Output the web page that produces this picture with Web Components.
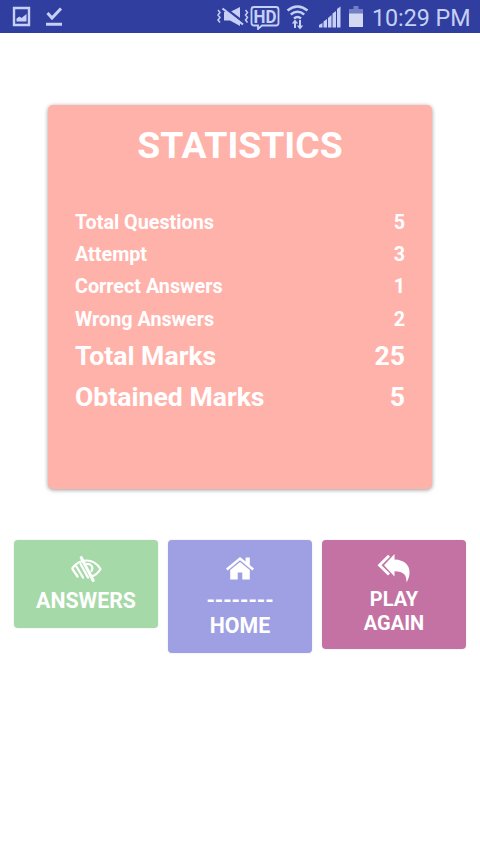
<!DOCTYPE html>
<html lang="en">
<head>
<meta charset="utf-8">
<meta name="viewport" content="width=device-width, initial-scale=1">
<title>Statistics</title>
<style>
  body {
    margin: 0;
    background: #fff;
    font-family: Roboto, "Liberation Sans", sans-serif;
  }
</style>
</head>
<body>
<quiz-result></quiz-result>

<script>
(() => {
  const icons = {
    eye: `<svg width="34" height="30" viewBox="0 0 34 30" fill="none" stroke="#fff" stroke-width="2.2" stroke-linecap="round">
      <path d="M3.500 15C7.500 9.500 12 7.500 17.500 7.500c6 0 10.500 3 14 8.500-2.500 4.500-5.500 6.500-9.500 7.800"/>
      <path d="M12.200 4.500l12 23" stroke-width="3"/>
      <path d="M3.500 16l5 7.500M7.500 13.500l6.500 11M11.500 11l7.500 13.500" stroke-width="2.300"/>
      <path d="M18 11c4.500-.5 6.500 3.500 4.500 7" stroke-width="2.200"/>
    </svg>`,
    home: `<svg width="34" height="30" viewBox="0 0 34 30" fill="#fff">
      <path d="M17 4L3 15.600l1.600 1.900L17 7.300l12.400 10.200 1.600-1.900-4.200-3.500V4.500h-4.200v4.100z"/>
      <path d="M17 9L7.200 17v9.500h7.500v-7h4.600v7h7.500V17z"/>
    </svg>`,
    reply: `<svg width="34" height="30" viewBox="0 0 34 30">
      <path d="M12 2.800L2.500 12.200l9.500 9.300" fill="none" stroke="#fff" stroke-width="2.800"/>
      <path d="M17.500 1v5.500c10 .4 15 5.500 15 13 0 3.600-1.200 7-3 10 .2-7.500-2.500-11-12-11.300v5.300L7 12.200z" fill="#fff"/>
    </svg>`
  };

  class StatusBar extends HTMLElement {
    connectedCallback() {
      if (this.shadowRoot) return;
      this.attachShadow({ mode: "open" }).innerHTML = `
      <style>
        :host {
          display: flex;
          align-items: center;
          height: 33px;
          box-sizing: border-box;
          padding: 0 9px 0 12px;
          background: #303f9f;
          color: #c6cff5;
        }
        svg { display: block; flex: none; }
        .notices { display: flex; gap: 15px; }
        .system { display: flex; align-items: center; margin-left: auto; }
        .clock {
          width: 99px;
          margin-left: 9px;
          padding-top: 3px;
          font-size: 23.300px;
          line-height: 28px;
          letter-spacing: -.05px;
          white-space: nowrap;
        }
      </style>
      <div class="notices">
        <svg width="19" height="21" viewBox="0 0 19 21">
          <path d="M2 2h15v17H2z" fill="none" stroke="currentColor" stroke-width="2.400"/>
          <path d="M4.500 15.500v-3l3-2 2 1.500 5-4v7.500z" fill="currentColor"/>
        </svg>
        <svg width="17" height="21" viewBox="0 0 17 21" fill="none" stroke="currentColor" stroke-width="3">
          <path d="M1.500 7l4.500 5L15 2.500M0 18.200h16"/>
        </svg>
      </div>
      <div class="system">
        <svg width="33" height="24" viewBox="0 0 33 24" fill="currentColor">
          <path d="M8 7h6l10-5v19l-10-5.500H8z"/>
          <path d="M8 2.500l20 15" stroke="#303f9f" stroke-width="2.500"/>
          <path d="M6.500 3.500L27 19.500" fill="none" stroke="currentColor" stroke-width="2.200"/>
          <path d="M2 5l2 2.500L2 10l2 2.500L2 15l2 2.500M29.500 5l2 2.500-2 2.500 2 2.500-2 2.500 2 2.500" fill="none" stroke="currentColor" stroke-width="1.500"/>
        </svg>
        <svg style="margin-left:1px" width="30" height="26" viewBox="0 0 30 26">
          <path d="M4 3h22q2.500 0 2.500 2.500v13.500q0 2.500-2.500 2.500H12l-4 3.500v-3.500H4q-2.500 0-2.500-2.500V5.500Q1.500 3 4 3z" fill="none" stroke="currentColor" stroke-width="1.800"/>
          <text x="15" y="18.500" text-anchor="middle" font-size="18" font-weight="700" textLength="23" lengthAdjust="spacingAndGlyphs" fill="currentColor">HD</text>
        </svg>
        <svg style="margin-left:6px" width="24" height="26" viewBox="0 0 24 26" fill="none" stroke="currentColor" stroke-width="2.500">
          <path d="M1.500 6.500q10-8 20 0M4.800 10.500q6.700-5.500 13.400 0M8 14.500q3.500-3 7 0"/>
          <path d="M9 24v-6M14 16v6" stroke-width="2"/>
          <path d="M5.800 19.500L9 15.500l3.200 4zM10.800 21.500l3.200 4 3.200-4z" fill="currentColor" stroke="none"/>
        </svg>
        <svg style="margin-left:9px" width="22" height="24" viewBox="0 0 22 24" fill="currentColor">
          <path d="M0 20l3.500-2v4.500H0zM4.500 16.500L8 14v8.500H4.500zM9 13l3.500-3v12.500H9zM13.500 8.500L17 6v16.500h-3.500zM18 4l3.500-2.500v21H18z"/>
        </svg>
        <svg style="margin-left:8px" width="14" height="24" viewBox="0 0 14 24">
          <path d="M4.500 1h5v3H14v5H0V4h4.500z" fill="#7180c4"/>
          <path d="M0 8.500h14V22H0z" fill="#d3d8f3"/>
        </svg>
        <span class="clock">10:29 PM</span>
      </div>`;
    }
  }

  class StatsCard extends HTMLElement {
    connectedCallback() {
      if (this.shadowRoot) return;
      this.attachShadow({ mode: "open" }).innerHTML = `
      <style>
        :host {
          display: block;
          box-sizing: border-box;
          width: 384px;
          height: 384px;
          padding: 18px 27px 0;
          border-radius: 5px;
          background: #ffb2aa;
          box-shadow: 0 1px 4px rgba(0, 0, 0, .4);
          color: #fff;
        }
        h1 {
          margin: 0 0 38.500px;
          font-size: 37.300px;
          line-height: 45px;
          font-weight: 700;
          text-align: center;
        }
      </style>
      <h1><slot name="title"></slot></h1>
      <slot></slot>`;
    }
  }

  class StatRow extends HTMLElement {
    connectedCallback() {
      if (this.shadowRoot) return;
      this.attachShadow({ mode: "open" }).innerHTML = `
      <style>
        :host {
          display: flex;
          justify-content: space-between;
          font-size: 19.750px;
          line-height: 32.400px;
          font-weight: 700;
        }
        :host([large]) {
          margin-bottom: 1.700px;
          font-size: 26.600px;
          line-height: 39.600px;
        }
      </style>
      <span>${this.getAttribute("label")}</span>
      <span><slot></slot></span>`;
    }
  }

  class ActionButton extends HTMLElement {
    connectedCallback() {
      if (this.shadowRoot) return;
      this.attachShadow({ mode: "open" }).innerHTML = `
      <style>
        :host {
          display: block;
          flex: 1;
          box-sizing: border-box;
          border-radius: 4px;
          background: var(--button-color);
          box-shadow: 0 0 2px rgba(0, 0, 0, .12);
        }
        button {
          display: flex;
          flex-direction: column;
          align-items: center;
          width: 100%;
          padding: 13px 0;
          border: 0;
          background: none;
          color: #fff;
          font: 700 var(--button-font, 21.300px/25px) Roboto, "Liberation Sans", sans-serif;
          cursor: pointer;
        }
        svg { display: block; margin-bottom: 5px; }
      </style>
      <button type="button">${icons[this.getAttribute("icon")]}<slot></slot></button>`;
    }
  }

  class QuizResult extends HTMLElement {
    connectedCallback() {
      if (this.shadowRoot) return;
      this.attachShadow({ mode: "open" }).innerHTML = `
      <style>
        :host {
          display: flex;
          flex-direction: column;
          height: 853px;
        }
        stats-card { margin: 72px auto 51px; flex: none; }
        .actions {
          display: flex;
          align-items: flex-start;
          gap: 10px;
          padding: 0 14px;
        }
        .answers { --button-color: #a5d9a7; height: 88px; }
        .home { --button-color: #9f9fe4; height: 113px; }
        .again { --button-color: #c472a4; --button-font: 20px/23.500px; height: 109px; }
      </style>
      <status-bar></status-bar>
      <stats-card>
        <span slot="title">STATISTICS</span>
        <stat-row label="Total Questions">5</stat-row>
        <stat-row label="Attempt">3</stat-row>
        <stat-row label="Correct Answers">1</stat-row>
        <stat-row label="Wrong Answers">2</stat-row>
        <stat-row label="Total Marks" large>25</stat-row>
        <stat-row label="Obtained Marks" large>5</stat-row>
      </stats-card>
      <div class="actions">
        <action-button class="answers" icon="eye"><span>ANSWERS</span></action-button>
        <action-button class="home" icon="home"><span>--------</span><span>HOME</span></action-button>
        <action-button class="again" icon="reply"><span>PLAY</span><span>AGAIN</span></action-button>
      </div>`;
    }
  }

  customElements.define("status-bar", StatusBar);
  customElements.define("stats-card", StatsCard);
  customElements.define("stat-row", StatRow);
  customElements.define("action-button", ActionButton);
  customElements.define("quiz-result", QuizResult);
})();
</script>
</body>
</html>
